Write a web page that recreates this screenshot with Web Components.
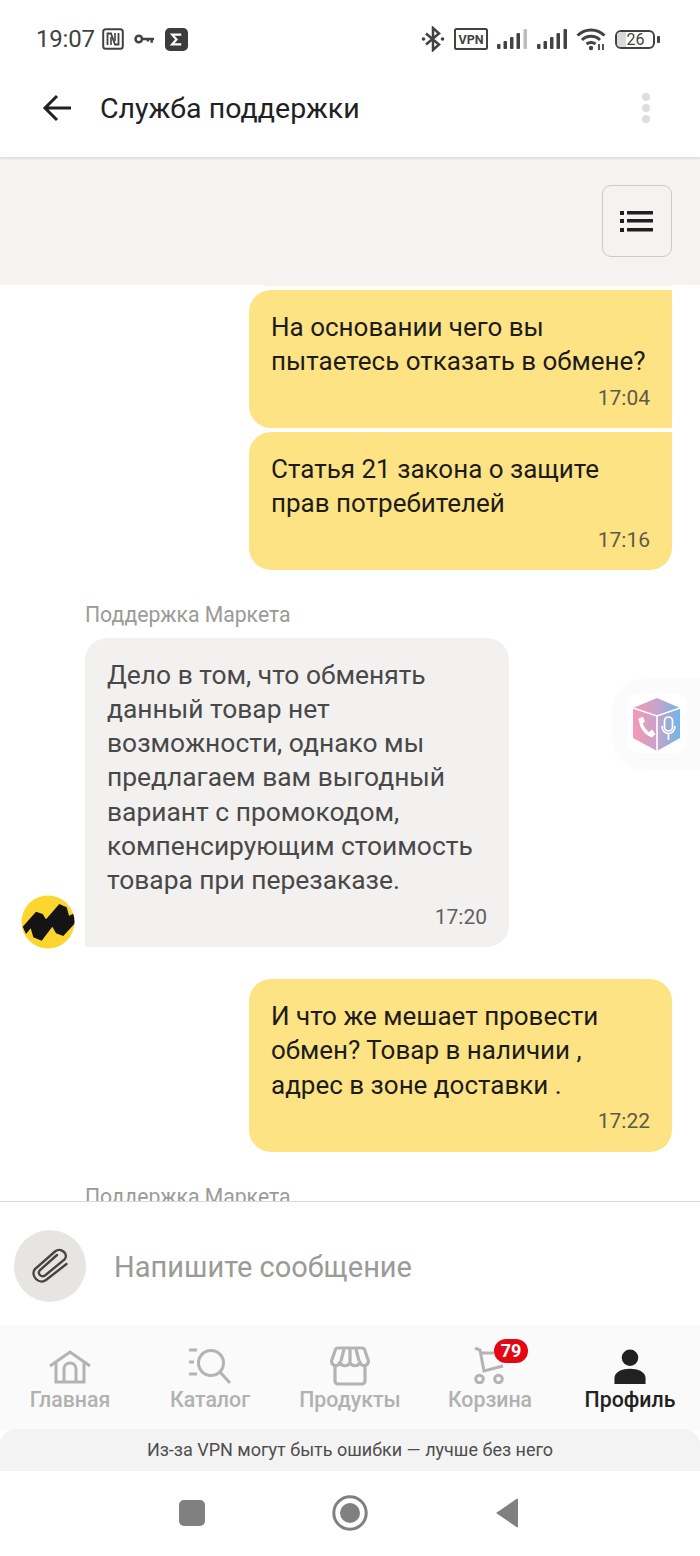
<!DOCTYPE html>
<html lang="ru">
<head>
<meta charset="utf-8">
<style>
    html, body { margin: 0; padding: 0; background: white; }
    body { width: 700px; height: 1556px; overflow: hidden; font-family: Roboto, "Liberation Sans", sans-serif; }
    support-screen { height: 1556px; }
</style>
</head>
<body>
<support-screen>
    <status-bar slot="status"></status-bar>
    <app-header slot="header" title="Служба поддержки"></app-header>
    <menu-band slot="band"></menu-band>

    <chat-bubble side="out" time="17:04" corner="first">На основании чего вы<br>пытаетесь отказать в обмене?</chat-bubble>
    <chat-bubble side="out" time="17:16" corner="last" style="margin-top:4px">Статья 21 закона о защите<br>прав потребителей</chat-bubble>

    <chat-bubble side="in" time="17:20" author="Поддержка Маркета" avatar style="margin-top:32px">Дело в том, что обменять<br>данный товар нет<br>возможности, однако мы<br>предлагаем вам выгодный<br>вариант с промокодом,<br>компенсирующим стоимость<br>товара при перезаказе.</chat-bubble>

    <chat-bubble side="out" time="17:22" style="margin-top:32px">И что же мешает провести<br>обмен? Товар в наличии ,<br>адрес в зоне доставки .</chat-bubble>

    <chat-bubble side="in" author="Поддержка Маркета" style="margin-top:32px"></chat-bubble>

    <message-input slot="input"></message-input>
    <tab-bar slot="tabs"></tab-bar>
    <vpn-banner slot="banner"></vpn-banner>
    <android-nav slot="nav"></android-nav>
</support-screen>

<script>
class SupportScreen extends HTMLElement {
    constructor() {
        super();
        const shadow = this.attachShadow({ mode: "open" });
        shadow.innerHTML = `
            <style>
                :host { display: flex; flex-direction: column; width: 700px; position: relative; }
                .chat {
                    height: 916px;
                    overflow: hidden;
                    display: flex;
                    flex-direction: column;
                    border-bottom: 1px solid #d9d9d9;
                    flex: none;
                }
                .prev { height: 1px; flex: none; margin: 0 28px 4px 265px; background: #fdf3cf; }
                .float {
                    position: absolute; left: 614px; top: 680px; width: 120px; height: 87px;
                    border-radius: 30px; background: #fbfbfb;
                    box-shadow: 0 1px 6px rgba(0,0,0,0.04);
                }
                .float svg { position: absolute; left: 13px; top: 13px; }
            </style>
            <slot name="status"></slot>
            <slot name="header"></slot>
            <slot name="band"></slot>
            <div class="chat"><div class="prev"></div><slot></slot></div>
            <slot name="input"></slot>
            <slot name="tabs"></slot>
            <slot name="banner"></slot>
            <slot name="nav"></slot>
            <div class="float">
                <svg width="60" height="60" viewBox="0 0 60 60">
                    <defs>
                        <linearGradient id="cube" x1="0" x2="1" y1="0" y2="0">
                            <stop offset="0" stop-color="#f498b4"/>
                            <stop offset="0.5" stop-color="#c9a3cb"/>
                            <stop offset="1" stop-color="#70b6e6"/>
                        </linearGradient>
                    </defs>
                    <rect width="60" height="60" rx="12" fill="white"/>
                    <path d="M30 5 L53 15 V45 L30 58 L6 45 V15 Z" fill="url(#cube)"/>
                    <path d="M6 15 L30 23 L53 15 M30 23 V58" fill="none" stroke="white" stroke-width="1.6"/>
                    <path d="M13.5 27 C14 34 19 41 25 42.5" fill="none" stroke="white" stroke-width="3.4"/>
                    <path d="M11 26 L16 23.5 L18 29 L14 31 Z M22 39 L25 36.5 L28.5 41 L25 44.5 Z" fill="white"/>
                    <rect x="37.5" y="24" width="8" height="14" rx="4" fill="none" stroke="white" stroke-width="1.7"/>
                    <path d="M35 33 c0 10 13 10 13 0 M41.5 41 v6" fill="none" stroke="white" stroke-width="1.7"/>
                </svg>
            </div>
        `;
    }
}

class StatusBar extends HTMLElement {
    constructor() {
        super();
        const shadow = this.attachShadow({ mode: "open" });
        shadow.innerHTML = `
            <style>
                :host { display: flex; align-items: center; height: 78px; box-sizing: border-box; padding: 0 40px 0 36px; color: #424242; background: white; position: relative; z-index: 2; }
                .time { font-size: 24px; margin-right: 7px; letter-spacing: -0.2px; }
                .left { display: flex; align-items: center; gap: 10px; }
                .right { margin-left: auto; display: flex; align-items: center; gap: 9px; }
                svg { display: block; }
            </style>
            <span class="time">19:07</span>
            <div class="left">
                <svg width="22" height="22" viewBox="0 0 22 22" fill="none" stroke="#424242">
                    <rect x="1.2" y="1.2" width="19.6" height="19.6" rx="2.5" stroke-width="2"/>
                    <path d="M5.5 17 V5.5 H9 L13 16.5 H16.5 V5" stroke-width="1.8"/>
                    <path d="M9 9 V17 M13 13 V5" stroke-width="1.6"/>
                </svg>
                <svg width="21" height="12" viewBox="0 0 22 12" fill="none" stroke="#424242" stroke-width="2.6">
                    <circle cx="5" cy="6" r="3.4"/>
                    <path d="M8 6 H21 M18.5 6 v4 M14.5 6 v2.5"/>
                </svg>
                <svg width="23" height="23" viewBox="0 0 24 24">
                    <rect width="24" height="24" rx="5" fill="#3c3c3c"/>
                    <path d="M17 7 H7.5 l4.5 5 l-4.5 5 H17" fill="none" stroke="white" stroke-width="2.3"/>
                </svg>
            </div>
            <div class="right">
                <svg width="24" height="26" viewBox="0 0 24 26" fill="none" stroke="#424242" stroke-width="2.5">
                    <path d="M5 7.5 L18 18.5 L12 24 V2 L18 7.5 L5 18.5"/>
                    <circle cx="2.5" cy="13" r="1.8" fill="#424242" stroke="none"/>
                    <circle cx="21.5" cy="13" r="1.8" fill="#424242" stroke="none"/>
                </svg>
                <svg width="34" height="22" viewBox="0 0 34 22">
                    <rect x="1" y="1" width="32" height="20" rx="1.5" fill="none" stroke="#424242" stroke-width="2"/>
                    <text x="17" y="15.5" text-anchor="middle" font-family="Roboto, sans-serif" font-weight="700" font-size="12.5" fill="#424242">VPN</text>
                </svg>
                <signal-bars dim></signal-bars>
                <signal-bars></signal-bars>
                <svg width="30" height="24" viewBox="0 0 30 24" fill="none" stroke="#424242" stroke-width="3" style="margin-left:-1px">
                    <path d="M1.5 8.5 C9 1 21 1 28.5 8.5"/>
                    <path d="M6 13 C11 8 19 8 24 13"/>
                    <path d="M10.5 17 C13 15 17 15 19.5 17"/>
                    <circle cx="15" cy="21" r="2.2" fill="#424242" stroke="none"/>
                    <path d="M23 17 v6 M27 17 v6" stroke-width="1.8"/>
                </svg>
                <div style="display:flex;align-items:center;gap:2px">
                    <battery-level></battery-level>
                    <span style="width:3px;height:7px;background:#424242;border-radius:1px"></span>
                </div>
            </div>
        `;
    }
}

class SignalBars extends HTMLElement {
    constructor() {
        super();
        const shadow = this.attachShadow({ mode: "open" });
        const last = this.hasAttribute("dim") ? "#bdbdbd" : "#424242";
        shadow.innerHTML = `
            <style>:host { display: block; line-height: 0; }</style>
            <svg width="31" height="20" viewBox="0 0 31 20" fill="#424242">
                <rect x="0" y="15" width="3.5" height="5" rx="1"/>
                <rect x="6.5" y="12" width="3.5" height="8" rx="1"/>
                <rect x="13" y="8" width="3.5" height="12" rx="1"/>
                <rect x="19.5" y="4" width="3.5" height="16" rx="1"/>
                <rect x="26.5" y="0" width="3.5" height="20" rx="1" fill="${last}"/>
            </svg>
        `;
    }
}

class BatteryLevel extends HTMLElement {
    constructor() {
        super();
        const shadow = this.attachShadow({ mode: "open" });
        shadow.innerHTML = `
            <style>
                :host { display: flex; width: 40px; height: 19px; box-sizing: border-box; border: 2px solid #424242; border-radius: 6px; position: relative; overflow: hidden; justify-content: center; align-items: center; font-size: 16px; color: #424242; padding-left: 1px; }
                .fill { position: absolute; left: 0; top: 0; bottom: 0; width: 9px; background: #d9d9d9; }
                span { position: relative; }
            </style>
            <div class="fill"></div><span>26</span>
        `;
    }
}

class AppHeader extends HTMLElement {
    constructor() {
        super();
        const shadow = this.attachShadow({ mode: "open" });
        shadow.innerHTML = `
            <style>
                :host { display: flex; align-items: center; height: 79px; box-sizing: border-box; padding: 0 0 19px 42px; background: white; position: relative; z-index: 1; box-shadow: 0 1px 3px rgba(0,0,0,0.14); }
                svg.back { margin-right: 28px; flex: none; }
                h1 { margin: 0; font-size: 28.5px; font-weight: 400; color: #212121; flex: 1; }
                .dots { display: flex; flex-direction: column; gap: 3px; margin: 0 50px 0 0; }
                .dots i { display: block; width: 8px; height: 8px; border-radius: 50%; background: #dedede; }
            </style>
            <svg class="back" width="30" height="28" viewBox="0 0 30 28" fill="none" stroke="#212121" stroke-width="3">
                <path d="M29 14 H3 M15 2 L3 14 L15 26"/>
            </svg>
            <h1></h1>
            <div class="dots"><i></i><i></i><i></i></div>
        `;
        shadow.querySelector("h1").textContent = this.getAttribute("title");
    }
}

class MenuBand extends HTMLElement {
    constructor() {
        super();
        const shadow = this.attachShadow({ mode: "open" });
        shadow.innerHTML = `
            <style>
                :host { display: flex; justify-content: flex-end; align-items: flex-start; height: 128px; box-sizing: border-box; padding: 28px 28px 0 0; background: #f4f3f1; }
                button { width: 70px; height: 72px; padding: 0; background: transparent; border: 1.5px solid #cbcac8; border-radius: 9px; display: flex; align-items: center; justify-content: center; }
            </style>
            <button>
                <svg width="34" height="22" viewBox="0 0 34 22" fill="#1f1f1f">
                    <rect x="0" y="1" width="4" height="4"/><rect x="7" y="1" width="26" height="3.5"/>
                    <rect x="0" y="9" width="4" height="4"/><rect x="7" y="9" width="26" height="3.5"/>
                    <rect x="0" y="18" width="4" height="4"/><rect x="7" y="18" width="26" height="3.5"/>
                </svg>
            </button>
        `;
    }
}

class ChatBubble extends HTMLElement {
    constructor() {
        super();
        const shadow = this.attachShadow({ mode: "open" });
        const out = this.getAttribute("side") == "out";
        const author = this.getAttribute("author");
        const time = this.getAttribute("time");
        const corner = this.getAttribute("corner");
        let radius = "22px";
        if (corner == "first") radius = "22px 0 0 22px";
        if (corner == "last") radius = "22px 0 22px 22px";
        if (!out) radius = "22px 22px 22px 0";
        shadow.innerHTML = `
            <style>
                :host { display: flex; flex-direction: column; flex: none; align-items: ${out ? "flex-end" : "flex-start"}; padding: ${out ? "0 28px 0 0" : "0 0 0 85px"}; position: relative; }
                .author { font-size: 21.2px; line-height: 24px; color: #9b9a97; margin: 1px 0 11px; }
                .bubble { box-sizing: border-box; width: ${out ? "423px" : "424px"}; border-radius: ${radius}; padding: 19.6px 22px 18.2px; background: ${out ? "#fee384" : "#f2f1ef"}; color: ${out ? "#1c1c1c" : "#484848"}; font-size: ${out ? "26px" : "26.4px"}; line-height: 34.3px; }
                .time { text-align: right; font-size: 21px; line-height: 24px; color: ${out ? "#5c5a4c" : "#606060"}; margin-top: 7.6px; }
                .avatar { position: absolute; left: 21px; bottom: -2px; }
            </style>
            ${author ? `<div class="author">${author}</div>` : ""}
            ${time ? `<div class="bubble"><slot></slot><div class="time">${time}</div></div>` : ""}
            ${this.hasAttribute("avatar") ? `
            <svg class="avatar" width="54" height="54" viewBox="0 0 54 54">
                <clipPath id="disc"><circle cx="27" cy="27" r="26.5"/></clipPath>
                <circle cx="27" cy="27" r="26.5" fill="#fcd52e"/>
                <path clip-path="url(#disc)" d="M1.7 31.7 L15 16.7 L21.7 19 L25 24.3 L38.3 9 L45.7 12.3 L48 20.7 L54 18 V28.3 L42.3 41 L35 38.3 L31.3 31.7 L20.7 45.7 L12.3 42.3 L9.7 33.3 L5 39 Z" fill="#141414"/>
            </svg>` : ""}
        `;
    }
}

class MessageInput extends HTMLElement {
    constructor() {
        super();
        const shadow = this.attachShadow({ mode: "open" });
        shadow.innerHTML = `
            <style>
                :host { display: flex; align-items: center; height: 123px; box-sizing: border-box; padding: 4px 0 0 14px; background: white; gap: 28px; }
                .clip { width: 72px; height: 72px; border-radius: 50%; background: #e6e5e1; display: flex; align-items: center; justify-content: center; }
                span { font-size: 29px; color: #9b9a97; margin-top: 2px; }
            </style>
            <div class="clip">
                <svg width="38" height="38" viewBox="0 0 38 38" fill="none" stroke="#454545" stroke-width="2.4" stroke-linecap="round">
                    <path d="M35.5 17 L15 33 C8 38 -1 29 4 22 L24 4.5 C30 0 38 7 33.5 12.5 L14 28.5 C10 31 6 26.5 9 23 L26 8"/>
                </svg>
            </div>
            <span>Напишите сообщение</span>
        `;
    }
}

class TabBar extends HTMLElement {
    constructor() {
        super();
        const shadow = this.attachShadow({ mode: "open" });
        shadow.innerHTML = `
            <style>
                :host { display: grid; grid-template-columns: repeat(5, 140px); height: 105px; background: #fafafa; }
            </style>
            <tab-item label="Главная">
                <svg width="42" height="34" viewBox="0 0 42 34" fill="none" stroke="#b3b3b3" stroke-width="3">
                    <path d="M1 16 L21 2 L41 16 M7 12 V32 H35 V12 M15 32 V19 C15 11 27 11 27 19 V32"/>
                </svg>
            </tab-item>
            <tab-item label="Каталог">
                <svg width="44" height="36" viewBox="0 0 44 36" fill="none" stroke="#b3b3b3" stroke-width="3">
                    <path d="M1 2 H9 M1 14 H6 M1 26 H9"/>
                    <circle cx="23" cy="15" r="12.5"/>
                    <path d="M32 24 L42 35"/>
                </svg>
            </tab-item>
            <tab-item label="Продукты">
                <svg width="40" height="40" viewBox="0 0 40 40" fill="none" stroke="#b3b3b3" stroke-width="3.2" stroke-linejoin="round" style="transform:translateY(2px)">
                    <path d="M5 19 V35 a3 3 0 0 0 3 3 H32 a3 3 0 0 0 3-3 V19"/>
                    <path d="M8 2 H32 a3 3 0 0 1 3 3 L38.5 15 C38 21 31 21 30 16 C29 21 21 21 20 16 C19 21 11 21 10 16 C9 21 2 21 1.5 15 L5 5 a3 3 0 0 1 3-3 Z"/>
                    <path d="M14 3 L11 15 M26 3 L29 15 M20 3 V15"/>
                </svg>
            </tab-item>
            <tab-item label="Корзина" badge="79">
                <svg width="32" height="37" viewBox="0 0 32 37" fill="none" stroke="#b3b3b3" stroke-width="3">
                    <path d="M1 1 L6 3 L10 24 L29 19"/>
                    <path d="M7 6 H20"/>
                    <circle cx="5.5" cy="32" r="3.8"/>
                    <circle cx="24.5" cy="32" r="3.8"/>
                </svg>
            </tab-item>
            <tab-item label="Профиль" active>
                <svg width="34" height="35" viewBox="0 0 34 36" fill="#212121">
                    <circle cx="17" cy="9" r="8.5"/>
                    <path d="M1 36 V30 C1 17 33 17 33 30 V36 Z"/>
                </svg>
            </tab-item>
        `;
    }
}

class TabItem extends HTMLElement {
    constructor() {
        super();
        const shadow = this.attachShadow({ mode: "open" });
        const active = this.hasAttribute("active");
        const badge = this.getAttribute("badge");
        shadow.innerHTML = `
            <style>
                :host { display: flex; flex-direction: column; align-items: center; position: relative; }
                .icon { height: 44px; margin-top: 15px; display: flex; align-items: flex-end; justify-content: center; position: relative; }
                .label { font-size: 21.3px; line-height: 24px; margin-top: 4px; color: ${active ? "#212121" : "#b1b1b1"}; font-weight: 500; }
                .badge { position: absolute; left: 20px; top: -1px; height: 24px; min-width: 34px; border-radius: 12px; background: #e30613; color: white; font-size: 18px; font-weight: 700; line-height: 24px; text-align: center; }
            </style>
            <div class="icon"><slot></slot>${badge ? `<div class="badge">${badge}</div>` : ""}</div>
            <div class="label">${this.getAttribute("label")}</div>
        `;
    }
}

class VpnBanner extends HTMLElement {
    constructor() {
        super();
        const shadow = this.attachShadow({ mode: "open" });
        shadow.innerHTML = `
            <style>
                :host { display: flex; align-items: center; justify-content: center; height: 42px; box-sizing: border-box; padding-bottom: 2px; margin-top: -1px; background: #f3f3f3; border-radius: 16px 16px 0 0; font-size: 18px; color: #4d4d4d; }
            </style>
            Из-за VPN могут быть ошибки — лучше без него
        `;
    }
}

class AndroidNav extends HTMLElement {
    constructor() {
        super();
        const shadow = this.attachShadow({ mode: "open" });
        shadow.innerHTML = `
            <style>
                :host { display: flex; align-items: center; justify-content: center; height: 85px; box-sizing: border-box; padding: 0 2px 1px 0; background: white; gap: 127px; }
                svg { display: block; }
            </style>
            <svg width="26" height="26" viewBox="0 0 26 26"><rect width="26" height="26" rx="5" fill="#808080"/></svg>
            <svg width="36" height="36" viewBox="0 0 36 36">
                <circle cx="18" cy="18" r="16.2" fill="none" stroke="#808080" stroke-width="3"/>
                <circle cx="18" cy="18" r="10" fill="#808080"/>
            </svg>
            <svg width="24" height="30" viewBox="0 0 24 30"><path d="M23 1.5 V28.5 a1 1 0 0 1 -1.6 .5 L1 15 L21.4 1 a1 1 0 0 1 1.6 .5 Z" fill="#808080"/></svg>
        `;
    }
}

customElements.define("signal-bars", SignalBars);
customElements.define("battery-level", BatteryLevel);
customElements.define("status-bar", StatusBar);
customElements.define("app-header", AppHeader);
customElements.define("menu-band", MenuBand);
customElements.define("chat-bubble", ChatBubble);
customElements.define("message-input", MessageInput);
customElements.define("tab-item", TabItem);
customElements.define("tab-bar", TabBar);
customElements.define("vpn-banner", VpnBanner);
customElements.define("android-nav", AndroidNav);
customElements.define("support-screen", SupportScreen);
</script>
</body>
</html>
